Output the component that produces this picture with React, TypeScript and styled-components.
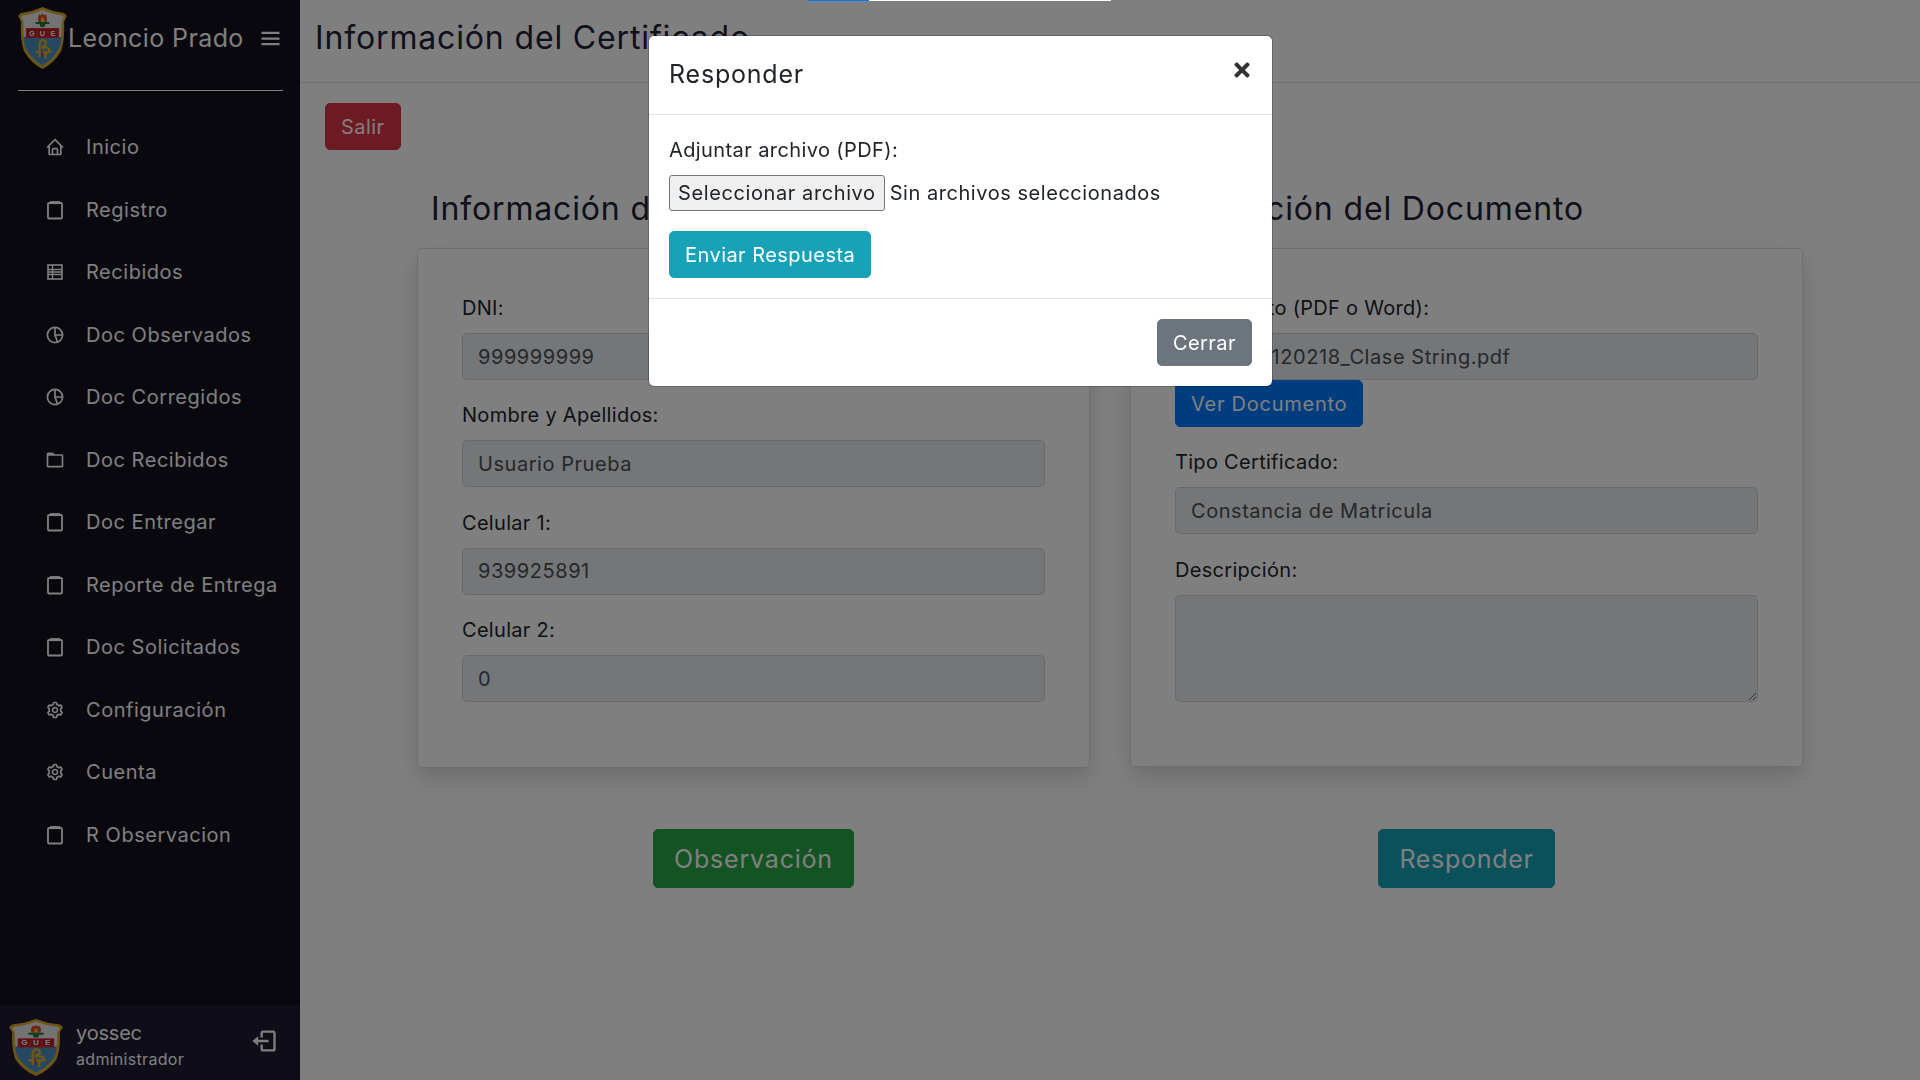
import React from 'react'
import styled, { createGlobalStyle } from 'styled-components'
import { BiHome, BiFolder, BiCog, BiLogOut, BiMenu } from 'react-icons/bi'
import { FaTimes } from 'react-icons/fa'

const GlobalStyle = createGlobalStyle`
  * { box-sizing: border-box; }
  html, body { margin: 0; height: 100%; overflow: hidden; }
  body {
    background: #fff;
    color: #212529;
    font-family: Inter, "Noto Sans", "Liberation Sans", sans-serif;
    font-size: 20px;
    line-height: 30px;
  }
`

const Page = styled.div`
  display: flex;
  height: 1080px;
`

const Sidebar = styled.aside`
  width: 300px;
  flex-shrink: 0;
  display: flex;
  flex-direction: column;
  background: #11101d;
  color: #fff;
`

const Brand = styled.div`
  display: flex;
  align-items: center;
  height: 91px;
  margin: 0 17px 0 18px;
  padding-bottom: 14px;
  border-bottom: 1px solid #fff;
`

const BrandName = styled.span`
  margin-left: 1px;
  font-size: 25px;
  letter-spacing: 0.4px;
  white-space: nowrap;
`

const MenuButton = styled.span`
  display: flex;
  margin-left: auto;
  font-size: 27px;
  margin-right: -1px;
`

const NavList = styled.nav`
  margin-top: 25px;
  display: flex;
  flex-direction: column;
`

const NavItem = styled.a`
  display: flex;
  align-items: center;
  height: 62.5px;
  padding-left: 45px;
  font-size: 20px;
  letter-spacing: 0.53px;
  color: #fff;
  white-space: nowrap;
`

const NavIcon = styled.span`
  display: flex;
  justify-content: center;
  width: 20px;
  margin-right: 21px;
  font-size: 22px;
`

const Profile = styled.div`
  display: flex;
  align-items: center;
  margin-top: auto;
  height: 75px;
  padding: 10px 24px 0 9px;
  background: #1d1b31;
  overflow: hidden;
`

const ProfileText = styled.div`
  margin-left: 13px;
  display: flex;
  flex-direction: column;
  margin-top: -5px;
`

const ProfileName = styled.span`
  font-size: 20px;
  line-height: 27px;
  letter-spacing: -0.2px;
`

const ProfileRole = styled.span`
  font-size: 16px;
  line-height: 24px;
  letter-spacing: 0.3px;
`

const LogoutIcon = styled.span`
  display: flex;
  margin-left: auto;
  margin-right: -2px;
  margin-top: -14px;
  font-size: 28px;
`

const Main = styled.main`
  flex: 1;
  min-width: 0;
`

const TopBar = styled.header`
  height: 83px;
  padding: 0 15px;
  display: flex;
  align-items: center;
  border-bottom: 1px solid #dee2e6;
`

const PageTitle = styled.h1`
  margin: -6px 0 0;
  font-size: 32px;
  font-weight: 400;
  line-height: 48px;
  letter-spacing: 0.85px;
  color: #212036;
  white-space: nowrap;
`

const Toolbar = styled.div`
  padding: 20px 25px 0;
`

const Button = styled.button<{ $bg: string; $lg?: boolean; $track?: number }>`
  display: inline-block;
  height: ${({ $lg }) => ($lg ? '59px' : '47px')};
  padding: ${({ $lg }) => ($lg ? '0 20px' : '0 15px')};
  border: 1px solid ${({ $bg }) => $bg};
  border-radius: 5px;
  background: ${({ $bg }) => $bg};
  color: #fff;
  font: inherit;
  font-size: ${({ $lg }) => ($lg ? '25px' : '20px')};
  letter-spacing: ${({ $lg, $track }) => $track ?? ($lg ? 0.8 : 0.45)}px;
  white-space: nowrap;
`

const Columns = styled.div`
  display: grid;
  grid-template-columns: 673px 673px;
  gap: 40px;
  padding: 0 117px;
  margin-top: 35px;
`

const Column = styled.section`
  display: flex;
  flex-direction: column;
`

const ColumnHeading = styled.h2`
  margin: 0 0 15px 14px;
  font-size: 32px;
  font-weight: 400;
  line-height: 48px;
  letter-spacing: 0.85px;
  color: #212036;
  white-space: nowrap;
`

const Card = styled.div<{ $height: number }>`
  height: ${({ $height }) => $height}px;
  padding: 44px;
  border: 1px solid rgba(0, 0, 0, 0.125);
  border-radius: 5px;
  background: #fff;
  box-shadow: 0 10px 22px rgba(0, 0, 0, 0.15);
`

const Field = styled.div`
  margin-bottom: 20.4px;
`

const FieldLabel = styled.label`
  display: block;
  margin-bottom: 10px;
  letter-spacing: 0.3px;
  color: #212529;
  white-space: nowrap;
`

const Input = styled.input`
  display: block;
  width: 100%;
  height: 47px;
  padding: 0 15px;
  border: 1px solid #ced4da;
  border-radius: 5px;
  background: #e9ecef;
  color: #495057;
  font: inherit;
  letter-spacing: 0.55px;
  opacity: 1;
`

const TextArea = styled.textarea`
  display: block;
  width: 100%;
  height: 107px;
  padding: 7px 15px;
  border: 1px solid #ced4da;
  border-radius: 5px;
  background: #e9ecef;
  font: inherit;
  resize: vertical;
`

const ColumnAction = styled.div<{ $gap: number }>`
  display: flex;
  justify-content: center;
  margin-top: ${({ $gap }) => $gap}px;
`

const Backdrop = styled.div`
  position: fixed;
  inset: 0;
  background: rgba(0, 0, 0, 0.5);
`

const ProgressStrip = styled.div`
  position: fixed;
  top: 0;
  left: 808px;
  width: 303px;
  height: 1px;
  display: flex;
  background: #fff;
`

const ProgressFill = styled.div`
  width: 61px;
  background: #007bff;
`

const Modal = styled.div`
  position: fixed;
  top: 35px;
  left: 648px;
  width: 625px;
  border: 1px solid rgba(0, 0, 0, 0.2);
  border-radius: 6px;
  background: #fff;
  background-clip: padding-box;
`

const ModalHeader = styled.div`
  display: flex;
  justify-content: space-between;
  height: 79px;
  padding: 20px;
  border-bottom: 1px solid #dee2e6;
`

const ModalTitle = styled.h3`
  margin: 0;
  font-size: 25px;
  font-weight: 400;
  line-height: 37px;
  letter-spacing: 0.8px;
  color: #212529;
`

const CloseIcon = styled.span`
  display: flex;
  height: 20px;
  align-items: center;
  margin-top: 4px;
  margin-right: -1px;
  font-size: 22px;
  color: #333;
`

const ModalBody = styled.div`
  padding: 20px;
  height: 184px;
  border-bottom: 1px solid #dee2e6;
`

const AttachLabel = styled.label`
  display: block;
  margin-bottom: 10px;
  letter-spacing: 0.4px;
`

const FileRow = styled.div`
  display: flex;
  align-items: center;
  gap: 5px;
  margin-bottom: 20px;
`

const FileButton = styled.span`
  display: block;
  height: 36px;
  line-height: 34px;
  padding: 0 8px;
  border: 1px solid #767676;
  border-radius: 3px;
  background: #efefef;
  letter-spacing: 0.6px;
  white-space: nowrap;
`

const FileStatus = styled.span`
  letter-spacing: 0.55px;
  white-space: nowrap;
`

const ModalFooter = styled.div`
  display: flex;
  justify-content: flex-end;
  padding: 20px;
`

// shield used in the sidebar brand and in the profile bar
const Logo = ({ width, height }: { width: number; height: number }) => (
  <svg width={width} height={height} viewBox="0 0 50 62" preserveAspectRatio="none" style={{ flexShrink: 0 }}>
    <path d="M25 0 L36 4 L47 6 L50 9 Q48 12 47 15 Q48 32 44 44 Q37 56 25 62 Q13 56 6 44 Q2 32 3 15 Q2 12 0 9 L3 6 L14 4 Z" fill="#dba92a" />
    <path d="M25 3 L35 6.5 L45 8.5 L47 10 Q45 13 44.5 16 Q45 32 41.5 42.5 Q35 53 25 58.5 Q15 53 8.5 42.5 Q5 32 5.5 16 Q5 13 3 10 L5 8.5 L15 6.5 Z" fill="#e6e6e6" />
    <path d="M5.6 30 H44.4 Q44 37 41.5 42.5 Q35 53 25 58.5 Q15 53 8.5 42.5 Q6 37 5.6 30 Z" fill="#4a90c0" />
    <path d="M25 6 C24 9 22 8 22 7 C20 10 20 12 21 15 H29 C30 12 30 10 28 7 C28 8 26 9 25 6 Z" fill="#e2492b" />
    <path d="M25 10 C23 12 23 13 24 15 H27 C27 13 27 12 25 10 Z" fill="#f4c430" />
    <path d="M18 15 H32 V17 H28 L27 20 H23 L22 17 H18 Z" fill="#0f7d3c" />
    <rect x="8" y="21" width="34" height="10" fill="#d7262f" />
    <rect x="10" y="22.5" width="8.5" height="7" fill="#a81c24" />
    <rect x="20.8" y="22.5" width="8.5" height="7" fill="#a81c24" />
    <rect x="31.5" y="22.5" width="8.5" height="7" fill="#a81c24" />
    <text x="14.2" y="28.8" textAnchor="middle" fontSize="7.5" fontWeight="700" fill="#fff" fontFamily="Liberation Sans, sans-serif">G</text>
    <text x="25" y="28.8" textAnchor="middle" fontSize="7.5" fontWeight="700" fill="#fff" fontFamily="Liberation Sans, sans-serif">U</text>
    <text x="35.8" y="28.8" textAnchor="middle" fontSize="7.5" fontWeight="700" fill="#fff" fontFamily="Liberation Sans, sans-serif">E</text>
    <path d="M22 50 V38 Q22 33 26 33 Q30 34 28 38 L24 40 M24 41 Q32 39 32 44 L29 46 M18 45 H34 M28 45 V52" fill="none" stroke="#e3ae28" strokeWidth="2.2" />
    <path d="M24 43 L25 50" stroke="#c9302c" strokeWidth="1.2" />
  </svg>
)

// square sheet with a tab on top, the icon most menu rows use
const SheetIcon = () => (
  <svg width="20" height="20" viewBox="0 0 20 20" fill="none" stroke="currentColor" strokeWidth="1.8">
    <rect x="3" y="3" width="14" height="15.5" rx="1" />
    <path d="M5 2.6 H15" strokeWidth="3" />
  </svg>
)

const ListIcon = () => (
  <svg width="20" height="20" viewBox="0 0 20 20" fill="none" stroke="currentColor" strokeWidth="1.6">
    <rect x="3" y="3" width="14" height="14" />
    <path d="M7.5 3 V17 M3 7.5 H17 M3 10 H17 M3 12.5 H17" strokeWidth="1.3" />
  </svg>
)

const PieIcon = () => (
  <svg width="20" height="20" viewBox="0 0 20 20" fill="none" stroke="currentColor" strokeWidth="1.7">
    <circle cx="10" cy="10" r="7.6" />
    <path d="M10 2.5 V10 H17.5 M10 10 L12.5 17" />
  </svg>
)

const navItems = [
  { label: 'Inicio', icon: <BiHome /> },
  { label: 'Registro', icon: <SheetIcon /> },
  { label: 'Recibidos', icon: <ListIcon /> },
  { label: 'Doc Observados', icon: <PieIcon /> },
  { label: 'Doc Corregidos', icon: <PieIcon /> },
  { label: 'Doc Recibidos', icon: <BiFolder /> },
  { label: 'Doc Entregar', icon: <SheetIcon /> },
  { label: 'Reporte de Entrega', icon: <SheetIcon /> },
  { label: 'Doc Solicitados', icon: <SheetIcon /> },
  { label: 'Configuración', icon: <BiCog /> },
  { label: 'Cuenta', icon: <BiCog /> },
  { label: 'R Observacion', icon: <SheetIcon /> },
]

const App = () => (
  <>
    <GlobalStyle />
    <Page>
      <Sidebar>
        <Brand>
          <Logo width={49} height={62} />
          <BrandName>Leoncio Prado</BrandName>
          <MenuButton>
            <BiMenu />
          </MenuButton>
        </Brand>
        <NavList>
          {navItems.map((item) => (
            <NavItem key={item.label}>
              <NavIcon>{item.icon}</NavIcon>
              {item.label}
            </NavItem>
          ))}
        </NavList>
        <Profile>
          <Logo width={54} height={57} />
          <ProfileText>
            <ProfileName>yossec</ProfileName>
            <ProfileRole>administrador</ProfileRole>
          </ProfileText>
          <LogoutIcon>
            <BiLogOut />
          </LogoutIcon>
        </Profile>
      </Sidebar>
      <Main>
        <TopBar>
          <PageTitle>Información del Certificado</PageTitle>
        </TopBar>
        <Toolbar>
          <Button $bg="#dc3545">Salir</Button>
        </Toolbar>
        <Columns>
          <Column>
            <ColumnHeading>Información del Usuario</ColumnHeading>
            <Card $height={520}>
              <Field>
                <FieldLabel>DNI:</FieldLabel>
                <Input disabled value="999999999" readOnly />
              </Field>
              <Field>
                <FieldLabel>Nombre y Apellidos:</FieldLabel>
                <Input disabled value="Usuario Prueba" readOnly />
              </Field>
              <Field>
                <FieldLabel>Celular 1:</FieldLabel>
                <Input disabled value="939925891" readOnly />
              </Field>
              <Field>
                <FieldLabel>Celular 2:</FieldLabel>
                <Input disabled value="0" readOnly />
              </Field>
            </Card>
            <ColumnAction $gap={61}>
              <Button $bg="#28a745" $lg>Observación</Button>
            </ColumnAction>
          </Column>
          <Column>
            <ColumnHeading>Información del Documento</ColumnHeading>
            <Card $height={519}>
              <FieldLabel>Documento (PDF o Word):</FieldLabel>
              <Input disabled value="1731693120218_Clase String.pdf" readOnly />
              <Button $bg="#007bff" $track={0.75}>Ver Documento</Button>
              <Field />
              <Field>
                <FieldLabel>Tipo Certificado:</FieldLabel>
                <Input disabled value="Constancia de Matricula" readOnly />
              </Field>
              <Field>
                <FieldLabel>Descripción:</FieldLabel>
                <TextArea disabled />
              </Field>
            </Card>
            <ColumnAction $gap={62}>
              <Button $bg="#17a2b8" $lg $track={0.7}>Responder</Button>
            </ColumnAction>
          </Column>
        </Columns>
      </Main>
    </Page>
    <Backdrop />
    <ProgressStrip>
      <ProgressFill />
    </ProgressStrip>
    <Modal>
      <ModalHeader>
        <ModalTitle>Responder</ModalTitle>
        <CloseIcon>
          <FaTimes />
        </CloseIcon>
      </ModalHeader>
      <ModalBody>
        <AttachLabel>Adjuntar archivo (PDF):</AttachLabel>
        <FileRow>
          <FileButton>Seleccionar archivo</FileButton>
          <FileStatus>Sin archivos seleccionados</FileStatus>
        </FileRow>
        <Button $bg="#17a2b8">Enviar Respuesta</Button>
      </ModalBody>
      <ModalFooter>
        <Button $bg="#6c757d">Cerrar</Button>
      </ModalFooter>
    </Modal>
  </>
)

export default App
